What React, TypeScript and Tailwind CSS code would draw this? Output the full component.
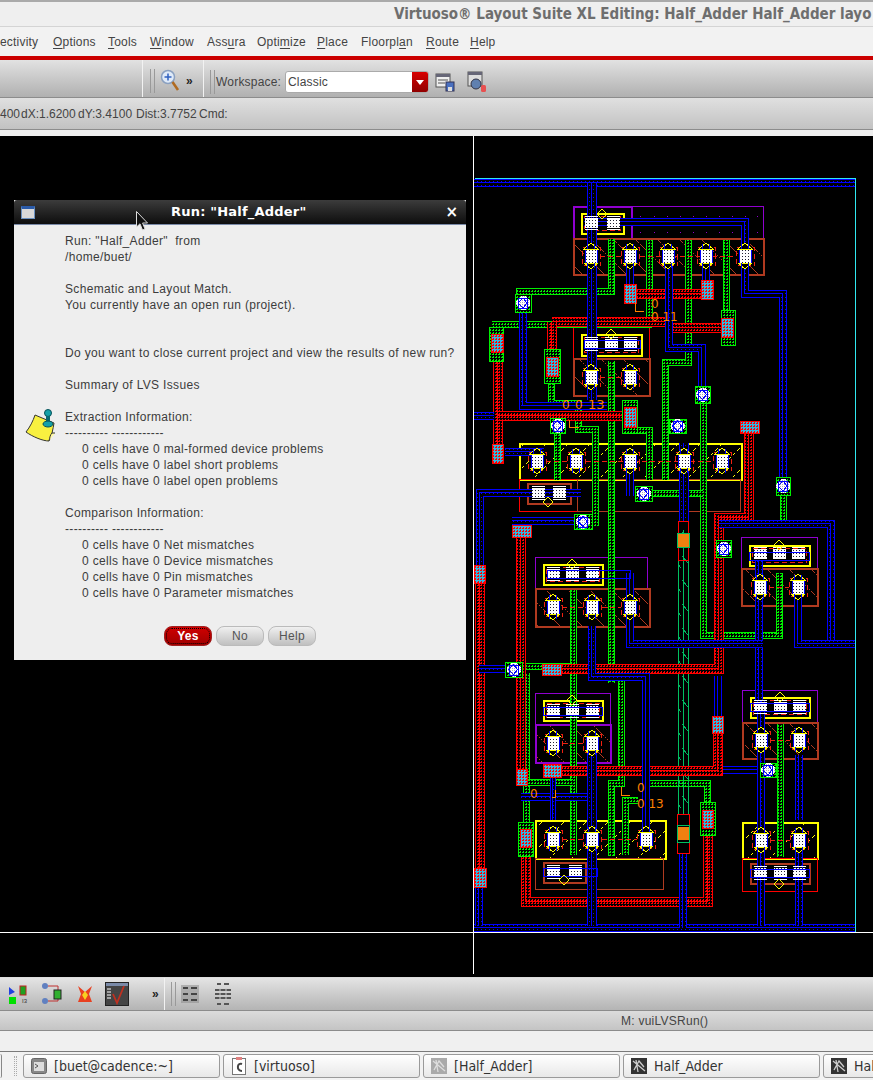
import React from "react";

const RED = "#ff0000";
const GRN = "#00f000";
const BLU = "#0000ff";
const YEL = "#ffff00";
const BRN = "#b03a20";
const PUR = "#9000d0";
const CYN = "#30b8e0";

function Wire({ c, d, w }: { c: "r" | "g" | "b"; d: string; w: number }) {
  const col = c === "r" ? RED : c === "g" ? GRN : BLU;
  const pat = c === "r" ? "url(#pr)" : c === "g" ? "url(#pg)" : "url(#pb)";
  const common = { d, fill: "none", strokeLinecap: "butt" as const, strokeLinejoin: "miter" as const };
  return (
    <g>
      <path {...common} stroke={col} strokeWidth={w} />
      <path {...common} stroke="#000" strokeWidth={w - 2} />
      <path {...common} stroke={pat} strokeWidth={w - 2} />
      {c !== "g" && <path {...common} stroke={col} strokeWidth={1} transform="translate(-0.5 -0.5)" />}
    </g>
  );
}

function Box({ a, b, c, d, s, f, w = 1, dash }: { a: number; b: number; c: number; d: number; s: string; f?: string; w?: number; dash?: string }) {
  return <rect x={a + 0.5} y={b + 0.5} width={c - a} height={d - b} stroke={s} strokeWidth={w} fill={f ?? "none"} strokeDasharray={dash} />;
}

function Dia({ x, y, rx = 5, ry = 5 }: { x: number; y: number; rx?: number; ry?: number }) {
  return <polygon points={`${x},${y - ry} ${x + rx},${y} ${x},${y + ry} ${x - rx},${y}`} fill="none" stroke={YEL} />;
}

function Tr({ x, y }: { x: number; y: number }) {
  return (
    <g>
      <Box a={x - 9} b={y - 9} c={x + 9} d={y + 9} s="#f02010" dash="5 3" />
      <rect x={x - 5} y={y - 7} width={11} height={15} fill="url(#pw)" />
      <path d={`M${x - 5.5} ${y - 8}V${y + 8}M${x + 6.5} ${y - 8}V${y + 8}`} stroke={BLU} fill="none" />
      <polygon points={`${x},${y - 13} ${x + 7},${y - 7} ${x - 7},${y - 7}`} fill="#000" stroke={YEL} />
      <polygon points={`${x},${y + 13} ${x + 7},${y + 7} ${x - 7},${y + 7}`} fill="#000" stroke={YEL} />
      <path d={`M${x - 3.5} ${y - 12}V${y - 7}M${x + 3.5} ${y - 12}V${y - 7}M${x - 3.5} ${y + 7}V${y + 12}M${x + 3.5} ${y + 7}V${y + 12}`} stroke={BLU} fill="none" />
    </g>
  );
}

function Ct({ x, y }: { x: number; y: number }) {
  return (
    <g>
      <rect x={x - 6} y={y - 5} width={13} height={10} fill="url(#pw)" />
      <path d={`M${x - 6} ${y - 6.5}H${x + 7}M${x - 6} ${y + 6.5}H${x + 7}`} stroke="#fff" fill="none" />
    </g>
  );
}

function RedVia({ a, b, c, d, s = RED }: { a: number; b: number; c: number; d: number; s?: string }) {
  return (
    <g>
      <rect x={a} y={b} width={c - a} height={d - b} fill={CYN} />
      <rect x={a} y={b} width={c - a} height={d - b} fill="url(#pr)" />
      <Box a={a} b={b} c={c} d={d} s={s} />
    </g>
  );
}

function GreenBox({ a, b, c, d }: { a: number; b: number; c: number; d: number }) {
  return (
    <g>
      <rect x={a} y={b} width={c - a} height={d - b} fill="#000" />
      <rect x={a} y={b} width={c - a} height={d - b} fill="url(#pg)" />
      <Box a={a} b={b} c={c} d={d} s={GRN} />
    </g>
  );
}

function WhiteVia({ a, b, c, d }: { a: number; b: number; c: number; d: number }) {
  const x = (a + c) / 2;
  const y = (b + d) / 2;
  return (
    <g>
      <GreenBox a={a} b={b} c={c} d={d} />
      <polygon points={`${x - 2},${y - 7} ${x + 2},${y - 7} ${x + 7},${y - 2} ${x + 7},${y + 2} ${x + 2},${y + 7} ${x - 2},${y + 7} ${x - 7},${y + 2} ${x - 7},${y - 2}`} fill="url(#pw2)" />
      <Box a={x - 5} b={y - 5} c={x + 4} d={y + 5} s={BLU} />
      <path d={`M${x - 5} ${y}L${x} ${y - 5}L${x + 4} ${y}L${x} ${y + 5}Z`} stroke={BLU} fill="none" />
    </g>
  );
}

function Label({ x, y, t, s = 13 }: { x: number; y: number; t: string; s?: number }) {
  return (
    <text x={x} y={y} fill="#ff8000" fontSize={s} fontFamily="'DejaVu Sans', sans-serif">
      {t}
    </text>
  );
}

const greens: [string, number][] = [
  ["M611 239V291H519V296", 7],
  ["M649 240V327", 7],
  ["M688 240V362H665V480", 7],
  ["M726 240V312", 7],
  ["M492 324H652", 7],
  ["M611 361V683", 7],
  ["M551 383V403H578V429H595V526", 7],
  ["M557 432V480", 7],
  ["M625 430H649V480", 7],
  ["M703 403V635H779V603", 7],
  ["M652 493H703", 7],
  ["M783 495V524", 7],
  ["M720 524H783", 7],
  ["M522 666H573", 7],
  ["M573 590V855", 7],
  ["M621 680V783H611V856", 7],
  ["M625 855V800H638", 7],
  ["M646 783H707V802", 7],
  ["M526 673V822", 7],
  ["M526 782H573", 7],
  ["M779 573V635", 7],
  ["M780 724V857", 7],
];

const reds: [string, number][] = [
  ["M630 294H707", 10],
  ["M552 322H672", 10],
  ["M552 322V367", 10],
  ["M666 328H727", 10],
  ["M498 347V463", 10],
  ["M498 416H634", 10],
  ["M749 425V518H719V669H552", 10],
  ["M521 531V781", 10],
  ["M480 565V880", 10],
  ["M718 733V771H552", 10],
  ["M708 828V902H526V830", 10],
];

const blues: [string, number][] = [
  ["M474 183H855", 8],
  ["M474 928H855", 8],
  ["M592 183V400", 10],
  ["M584 222H745V294H783V480", 8],
  ["M630 256V284", 8],
  ["M706 256V280", 8],
  ["M669 256V348H702V386", 8],
  ["M523 296V406H607", 8],
  ["M474 416H494", 8],
  ["M505 452H544", 8],
  ["M630 400V430", 8],
  ["M630 461V496", 8],
  ["M480 565V493H581", 8],
  ["M512 521H577", 8],
  ["M684 443V522", 10],
  ["M683 853V928", 8],
  ["M719 524H831V644H794", 8],
  ["M798 590V644H855", 8],
  ["M759 560V700", 8],
  ["M630 573V644H763", 8],
  ["M592 626V677H646V838", 8],
  ["M718 676V716", 8],
  ["M723 770H767", 8],
  ["M479 669H506", 8],
  ["M521 797H592", 8],
  ["M592 753V926", 10],
  ["M761 700V926", 8],
  ["M799 755V820", 8],
  ["M799 850V926", 8],
  ["M479 887V926", 8],
  ["M553 775V820", 6],
];

const thin: [number, number, number, number][] = [
  [584, 340, 640, 348],
  [547, 570, 630, 578],
  [749, 552, 809, 560],
  [543, 707, 602, 715],
  [750, 703, 809, 711],
  [750, 869, 809, 877],
  [543, 868, 597, 876],
];

const trans: [number, number][] = [
  [591, 256], [630, 256], [668, 256], [706, 256], [745, 256],
  [591, 377], [630, 377],
  [537, 461], [576, 461], [630, 461], [684, 461], [722, 461],
  [553, 607], [592, 607], [630, 607],
  [760, 587], [798, 587],
  [553, 743], [592, 743],
  [761, 740], [799, 740],
  [553, 839], [592, 839], [646, 839],
  [761, 840], [799, 840],
];

const contacts: [number, number][] = [
  [591, 223], [613, 223],
  [591, 344], [611, 344], [630, 344],
  [538, 493], [559, 493],
  [553, 574], [572, 574], [592, 574],
  [760, 554], [779, 554], [798, 554],
  [553, 711], [572, 711], [592, 711],
  [760, 707], [780, 707], [799, 707],
  [553, 872], [575, 872],
  [760, 873], [780, 873], [799, 873],
];

const yellowBoxes: [number, number, number, number][] = [
  [581, 213, 623, 233],
  [581, 334, 641, 355],
  [543, 564, 602, 584],
  [749, 545, 809, 565],
  [543, 700, 602, 720],
  [750, 697, 809, 717],
];

const dots = [640, 654, 667, 680, 693, 706, 719, 732, 745, 757];

const gateLinks = "M600 256.5H735M600 377.5H621M546 461.5H713M562 607.5H621M769 587.5H789M562 743.5H583M770 740.5H790M562 839.5H637M770 840.5H790";

function LayoutArt() {
  return (
    <svg viewBox="0 136 873 838" width={873} height={838} className="block" shapeRendering="crispEdges">
      <defs>
        <pattern id="pr" width="3" height="3" patternUnits="userSpaceOnUse">
          <rect width="2" height="1" fill={RED} />
          <rect x="1" y="2" width="1" height="1" fill={RED} />
        </pattern>
        <pattern id="pg" width="3" height="3" patternUnits="userSpaceOnUse">
          <rect width="2" height="1" fill={GRN} />
          <rect x="1" y="2" width="1" height="1" fill={GRN} />
        </pattern>
        <pattern id="pb" width="4" height="4" patternUnits="userSpaceOnUse">
          <rect x="1" y="1" width="1" height="1" fill={BLU} />
        </pattern>
        <pattern id="pw" width="3" height="3" patternUnits="userSpaceOnUse">
          <rect width="3" height="3" fill="#fff" />
          <rect x="1" y="1" width="1" height="1" fill="#223" />
        </pattern>
        <pattern id="pw2" width="2" height="2" patternUnits="userSpaceOnUse">
          <rect width="2" height="2" fill="#fff" />
          <rect width="1" height="1" fill="#aab" />
        </pattern>
        <pattern id="hb" width="22" height="22" patternUnits="userSpaceOnUse">
          <path d="M0 0L22 22" stroke={BRN} strokeDasharray="2 1" />
        </pattern>
        <pattern id="hy" width="22" height="22" patternUnits="userSpaceOnUse">
          <path d="M22 0L0 22" stroke={YEL} strokeDasharray="3 3" />
        </pattern>
        <pattern id="hg" width="11" height="24" patternUnits="userSpaceOnUse">
          <path d="M0 4L10 16" stroke="#00b060" />
        </pattern>
      </defs>
      <rect x="0" y="136" width="873" height="838" fill="#000" />

      {/* cells */}
      <Box a={573} b={206} c={631} d={238} s={PUR} w={2} />
      <Box a={631} b={206} c={763} d={238} s={PUR} />
      {dots.map((x) => (
        <g key={x}>
          <rect x={x} y={216} width={1} height={1} fill={PUR} />
          <rect x={x} y={232} width={1} height={1} fill={PUR} />
        </g>
      ))}
      <rect x={573} y={238} width={190} height={36} fill="url(#hb)" />
      <Box a={573} b={238} c={763} d={274} s={BRN} w={2} />
      <Box a={573} b={327} c={649} d={358} s={RED} />
      <rect x={573} y={358} width={76} height={37} fill="url(#hb)" />
      <Box a={573} b={358} c={649} d={395} s={BRN} w={2} />
      <rect x={519} y={443} width={222} height={36} fill="url(#hy)" />
      <Box a={519} b={443} c={741} d={479} s={YEL} w={2} />
      <Box a={519} b={479} c={577} d={511} s={RED} />
      <Box a={577} b={479} c={740} d={511} s={BRN} />
      <Box a={527} b={483} c={570} d={503} s={BRN} w={2} />
      <Box a={535} b={557} c={647} d={588} s={PUR} />
      <rect x={535} y={588} width={114} height={38} fill="url(#hb)" />
      <Box a={535} b={588} c={649} d={626} s={BRN} w={2} />
      <Box a={741} b={537} c={817} d={568} s={PUR} />
      <rect x={741} y={568} width={76} height={37} fill="url(#hb)" />
      <Box a={741} b={568} c={817} d={605} s={BRN} w={2} />
      <Box a={535} b={693} c={610} d={724} s={PUR} />
      <rect x={535} y={724} width={75} height={38} fill="url(#hb)" />
      <Box a={535} b={724} c={610} d={762} s={PUR} w={2} />
      <Box a={742} b={690} c={817} d={722} s={PUR} />
      <rect x={742} y={722} width={75} height={36} fill="url(#hb)" />
      <Box a={742} b={722} c={817} d={758} s={BRN} w={2} />
      <rect x={535} y={820} width={130} height={38} fill="url(#hy)" />
      <Box a={535} b={820} c={665} d={858} s={YEL} w={2} />
      <Box a={535} b={858} c={663} d={889} s={BRN} />
      <Box a={543} b={862} c={585} d={882} s={BRN} w={2} />
      <rect x={742} y={822} width={75} height={36} fill="url(#hy)" />
      <Box a={742} b={822} c={817} d={858} s={YEL} w={2} />
      <Box a={742} b={858} c={817} d={891} s={RED} />
      <Box a={750} b={863} c={809} d={883} s={BRN} w={2} />
      {yellowBoxes.map(([a, b, c, d], i) => (
        <g key={i}>
          <Box a={a} b={b} c={c} d={d} s={YEL} w={2} />
          <Box a={a + 3} b={b + 3} c={c - 3} d={d - 3} s="#f02010" dash="5 3" />
        </g>
      ))}

      {/* wires */}
      {greens.map(([d, w], i) => <Wire key={i} c="g" d={d} w={w} />)}
      <rect x={678} y={530} width={11} height={285} fill="url(#hg)" />
      <path d="M678.5 530V815M683.5 530V815M688.5 530V815" stroke="#00c060" fill="none" />
      {reds.map(([d, w], i) => <Wire key={i} c="r" d={d} w={w} />)}
      {blues.map(([d, w], i) => <Wire key={i} c="b" d={d} w={w} />)}
      <path d={gateLinks} stroke="#f02010" strokeDasharray="5 3" fill="none" />
      {contacts.map(([x, y], i) => <Ct key={i} x={x} y={y} />)}
      {thin.map(([a, b, c, d], i) => <Box key={i} a={a} b={b} c={c} d={d} s={BLU} />)}
      {trans.map(([x, y], i) => <Tr key={i} x={x} y={y} />)}
      <Dia x={602} y={214} />
      <Dia x={611} y={334} />
      <Dia x={548} y={502} />
      <Dia x={572} y={564} />
      <Dia x={779} y={545} />
      <Dia x={572} y={700} />
      <Dia x={780} y={697} />
      <Dia x={564} y={880} />
      <Dia x={779} y={884} />

      {/* green boxes + vias */}
      <GreenBox a={721} b={310} c={735} d={345} />
      <GreenBox a={544} b={349} c={560} d={383} />
      <GreenBox a={489} b={327} c={503} d={361} />
      <GreenBox a={622} b={400} c={637} d={433} />
      <GreenBox a={518} b={822} c={533} d={856} />
      <GreenBox a={700} b={802} c={715} d={835} />
      <RedVia a={624} b={284} c={636} d={303} />
      <RedVia a={701} b={280} c={713} d={299} />
      <RedVia a={721} b={318} c={733} d={337} />
      <RedVia a={546} b={357} c={558} d={376} />
      <RedVia a={491} b={334} c={503} d={352} />
      <RedVia a={492} b={444} c={503} d={463} />
      <RedVia a={624} b={407} c={636} d={427} />
      <RedVia a={740} b={421} c={759} d={433} />
      <RedVia a={512} b={525} c={531} d={537} />
      <RedVia a={474} b={565} c={485} d={583} />
      <RedVia a={542} b={664} c={561} d={675} />
      <RedVia a={712} b={716} c={723} d={733} />
      <RedVia a={543} b={764} c={561} d={777} />
      <RedVia a={516} b={769} c={527} d={785} />
      <RedVia a={520} b={829} c={531} d={847} />
      <RedVia a={702} b={810} c={713} d={828} />
      <RedVia a={474} b={868} c={486} d={887} />
      <WhiteVia a={515} b={294} c={531} d={312} />
      <WhiteVia a={550} b={418} c={565} d={433} />
      <WhiteVia a={669} b={419} c={686} d={433} />
      <WhiteVia a={695} b={386} c={710} d={403} />
      <WhiteVia a={635} b={486} c={652} d={501} />
      <WhiteVia a={574} b={514} c={592} d={529} />
      <WhiteVia a={776} b={477} c={790} d={495} />
      <WhiteVia a={716} b={540} c={731} d={557} />
      <WhiteVia a={505} b={662} c={522} d={677} />
      <WhiteVia a={760} b={763} c={776} d={777} />

      {/* orange pins */}
      <Box a={678} b={521} c={688} d={560} s={RED} />
      <rect x={678} y={533} width={12} height={14} fill="#f08010" />
      <Box a={677} b={533} c={689} d={547} s="#00c060" />
      <Box a={677} b={814} c={689} d={853} s={RED} />
      <rect x={677} y={827} width={13} height={13} fill="#f08010" />
      <Box a={677} b={825} c={689} d={842} s="#00c060" />
      <path d="M635 303V311H644M579 427H569V420M552 797H555V790M621 795H630M621 795V787" stroke="#ff8000" fill="none" />
      <Label x={651} y={308} t="0" s={12} />
      <Label x={651} y={321} t="0 11" s={12} />
      <Label x={562} y={409} t="0" s={12} />
      <Label x={575} y={409} t="0" s={12} />
      <Label x={588} y={409} t="13" s={13} />
      <Label x={530} y={798} t="0" s={12} />
      <Label x={637} y={792} t="0" s={12} />
      <Label x={637} y={808} t="0 13" s={12} />

      {/* ruler & boundary */}
      <path d="M474.5 178.5H855.5V932" stroke="#30e8f0" fill="none" />
      <path d="M473.5 136V974M0 932.5H873" stroke="#ffffff" fill="none" />
    </svg>
  );
}

function Grip({ className = "" }: { className?: string }) {
  return <div className={`w-[5px] h-[24px] border-x border-[#999] shrink-0 ${className}`} />;
}

function Menu({ t, u, w }: { t: string; u: number; w: number }) {
  return (
    <span className="shrink-0" style={{ width: w }}>
      {t.slice(0, u)}
      <span className="underline underline-offset-2">{t.slice(u, u + 1)}</span>
      {t.slice(u + 1)}
    </span>
  );
}

const menus: [string, number, number][] = [
  ["Options", 0, 55],
  ["Tools", 0, 42],
  ["Window", 0, 57],
  ["Assura", 3, 50],
  ["Optimize", 4, 60],
  ["Place", 0, 44],
  ["Floorplan", 7, 65],
  ["Route", 0, 44],
  ["Help", 0, 30],
];

const lines: [string, boolean?][] = [
  ['Run: "Half_Adder"  from'],
  ["/home/buet/"],
  [""],
  ["Schematic and Layout Match."],
  ["You currently have an open run (project)."],
  [""],
  [""],
  ["Do you want to close current project and view the results of new run?"],
  [""],
  ["Summary of LVS Issues"],
  [""],
  ["Extraction Information:"],
  ["---------- ------------"],
  ["0 cells have 0 mal-formed device problems", true],
  ["0 cells have 0 label short problems", true],
  ["0 cells have 0 label open problems", true],
  [""],
  ["Comparison Information:"],
  ["---------- ------------"],
  ["0 cells have 0 Net mismatches", true],
  ["0 cells have 0 Device mismatches", true],
  ["0 cells have 0 Pin mismatches", true],
  ["0 cells have 0 Parameter mismatches", true],
];

function NoteIcon() {
  return (
    <svg viewBox="0 0 34 34" width={34} height={34} className="block">
      <path d="M10 6L29 14C28 20 27 26 24 32C18 32 8 28 1 23C5 18 8 12 10 6Z" fill="#f8f040" stroke="#333" strokeWidth="1" />
      <path d="M24 32C25 28 25 26 27 24L30 24" fill="#fff8a0" stroke="#333" strokeWidth="1" />
      <circle cx="23" cy="4" r="3.5" fill="#14a0a8" stroke="#075058" />
      <path d="M23 7V14" stroke="#0a6870" strokeWidth="4" />
      <ellipse cx="23" cy="15" rx="5" ry="3" fill="#14a0a8" stroke="#075058" />
    </svg>
  );
}

function Cursor() {
  return (
    <svg viewBox="0 0 12 20" width={12} height={20} className="absolute left-[136px] top-[75px] z-10">
      <path d="M0.5 0.5V16L4 12.8L6.5 19L9 18L6.6 12H11.5Z" fill="#111" stroke="#ddd" strokeWidth="1" />
    </svg>
  );
}

function Dialog() {
  return (
    <div className="absolute left-[14px] top-[64px] w-[452px] h-[460px] flex flex-col bg-[#eeeeee]">
      <div className="h-[25px] shrink-0 rounded-t-[3px] bg-gradient-to-b from-[#3c3c3c] to-[#0e0e0e] border-b border-[#7a8aa8] flex items-center px-[7px] relative">
        <div className="w-[14px] h-[13px] bg-[#d8d8d8] border border-[#6a90c0] border-t-[3px] border-t-[#2a5aa8]" />
        <div className="flex-1 text-center text-white font-bold text-[13px] tracking-[0.2px] font-['DejaVu_Sans',sans-serif] pr-[3px]">Run: "Half_Adder"</div>
        <span className="text-white text-[15px] font-bold leading-none mr-[1px] font-['DejaVu_Sans',sans-serif]">×</span>
      </div>
      <div className="flex-1 flex relative text-[#3c3c3c] text-[12px] leading-[16px] font-['Liberation_Sans',sans-serif] tracking-[0.33px]">
        <div className="w-[51px] shrink-0" />
        <div className="pt-[8px] whitespace-pre">
          {lines.map(([t, ind], i) => (
            <div key={i} className={ind ? "h-4 pl-[17px]" : "h-4"}>
              {t}
            </div>
          ))}
        </div>
        <div className="absolute left-[11px] top-[184px]">
          <NoteIcon />
        </div>
        <div className="absolute left-[150px] top-[401px] flex gap-[4px] text-[12px] tracking-[0.3px]">
          <button className="w-[48px] h-[20px] rounded-[8px] bg-gradient-to-b from-[#d00000] to-[#a00000] text-white font-bold border border-[#a02020] outline-1 outline-dotted outline-black -outline-offset-[3px]">Yes</button>
          <button className="w-[48px] h-[20px] rounded-[8px] bg-gradient-to-b from-[#f0f0f0] to-[#c0c0c0] text-[#555] border border-[#bbb]">No</button>
          <button className="w-[48px] h-[20px] rounded-[8px] bg-gradient-to-b from-[#f0f0f0] to-[#c0c0c0] text-[#555] border border-[#bbb]">Help</button>
        </div>
      </div>
    </div>
  );
}

function TaskBtn({ w, icon, label }: { w: number; icon: React.ReactNode; label: string }) {
  return (
    <div className="shrink-0 h-[24px] rounded-[3px] border border-[#9a9a9a] bg-gradient-to-b from-white to-[#e8e8e8] flex items-center pl-[7px] gap-[7px] text-[14px] text-[#333] overflow-hidden whitespace-nowrap font-['DejaVu_Sans',sans-serif] [font-stretch:condensed]" style={{ width: w }}>
      {icon}
      <span>{label}</span>
    </div>
  );
}

function LayIcon({ dark }: { dark?: boolean }) {
  return (
    <svg viewBox="0 0 16 16" width={16} height={16} className="block shrink-0">
      <rect width="16" height="16" fill={dark ? "#333" : "#aaa"} />
      <path d="M2 3L14 13M3 12L8 3L13 9M5 2L7 14" stroke={dark ? "#ccc" : "#ddd"} strokeWidth="1.3" fill="none" />
    </svg>
  );
}

export default function App() {
  const ui = "font-['Liberation_Sans',sans-serif]";
  return (
    <div className={`w-[873px] h-[1080px] overflow-hidden flex flex-col bg-[#efefef] text-[#444] ${ui}`}>
      {/* title */}
      <div className="h-[27px] shrink-0 border-t-2 border-t-[#aaa] border-b border-b-[#d4d4d4] bg-[#efefef] flex items-center pl-[394px] whitespace-nowrap overflow-hidden">
        <span className="font-bold text-[15px] text-[#6e6e6e] font-['DejaVu_Sans',sans-serif] [font-stretch:condensed]">Virtuoso® Layout Suite XL Editing: Half_Adder Half_Adder layo</span>
      </div>
      {/* menu */}
      <div className="h-[29px] shrink-0 bg-[#f2f2f2] flex items-center text-[12px] tracking-[0.2px] whitespace-nowrap">
        <span className="w-[53px] shrink-0">ectivity</span>
        {menus.map(([t, u, w]) => (
          <Menu key={t} t={t} u={u} w={w} />
        ))}
      </div>
      <div className="h-[4px] shrink-0 bg-[#cc0000]" />
      {/* toolbar */}
      <div className="h-[38px] shrink-0 bg-gradient-to-b from-[#e2e2e2] to-[#b0b0b0] border-b border-[#8c8c8c] flex items-stretch">
        <div className="w-[143px] shrink-0 border-r border-[#f2f2f2]" />
        <div className="w-[61px] shrink-0 border-r border-[#f2f2f2] flex items-center pl-[7px] pt-[5px]">
          <Grip />
          <svg viewBox="0 0 20 24" width={20} height={24} className="ml-[5px] block">
            <circle cx="8" cy="8" r="6.5" fill="#dfeaf8" stroke="#8aa0c0" strokeWidth="1.5" />
            <path d="M8 4.5V11.5M4.5 8H11.5" stroke="#3060c0" strokeWidth="1.5" />
            <path d="M12.5 13L18 21" stroke="#b06a20" strokeWidth="2.6" />
          </svg>
          <span className="ml-[6px] text-[12px] font-bold text-[#222]">»</span>
        </div>
        <div className="flex items-center pl-[6px] pt-[7px]">
          <Grip />
          <span className="ml-[1px] w-[69px] text-[12px] tracking-[0.2px]">Workspace:</span>
          <div className="w-[144px] h-[22px] rounded-[3px] bg-white border border-[#aaa] flex items-center justify-between overflow-hidden text-[12px] pl-[2px]">
            <span className="tracking-[0.2px]">Classic</span>
            <div className="w-[16px] h-full bg-gradient-to-b from-[#d80000] to-[#900000] flex items-center justify-center">
              <div className="w-0 h-0 border-x-[4px] border-x-transparent border-t-[5px] border-t-white" />
            </div>
          </div>
          <svg viewBox="0 0 20 20" width={20} height={20} className="ml-[6px] block">
            <rect x="1" y="2" width="14" height="13" fill="#eee" stroke="#555" />
            <rect x="1" y="2" width="14" height="3" fill="#667" />
            <path d="M3 8H13M3 11H10" stroke="#555" />
            <rect x="11" y="10" width="8" height="9" fill="#4a70c0" stroke="#335" />
            <rect x="13" y="15" width="4" height="4" fill="#ddd" />
          </svg>
          <svg viewBox="0 0 20 22" width={20} height={22} className="ml-[12px] block">
            <rect x="1" y="1" width="14" height="14" fill="#ddd" stroke="#555" />
            <rect x="1" y="1" width="14" height="3" fill="#667" />
            <circle cx="9" cy="13" r="5" fill="#6080b0" stroke="#334" />
            <rect x="14" y="14" width="5" height="7" rx="1.5" fill="#e85050" />
          </svg>
        </div>
      </div>
      {/* coords */}
      <div className="h-[32px] shrink-0 bg-gradient-to-b from-[#e0e0e0] to-[#c2c2c2] border-b border-[#8c8c8c] flex items-center text-[12px] whitespace-pre overflow-hidden">
        <span className="w-[21px] shrink-0">400</span>
        <span className="w-[57px] shrink-0">dX:1.6200</span>
        <span className="w-[58px] shrink-0">dY:3.4100</span>
        <span className="w-[63px] shrink-0">Dist:3.7752</span>
        <span>Cmd:</span>
      </div>
      <div className="h-[6px] shrink-0 bg-[#efefef]" />
      {/* canvas */}
      <div className="h-[841px] shrink-0 bg-black relative">
        <LayoutArt />
        <Dialog />
        <Cursor />
      </div>
      {/* bottom toolbar */}
      <div className="h-[34px] shrink-0 bg-gradient-to-b from-[#e4e4e4] to-[#b4b4b4] border-t border-[#ddd] border-b border-b-[#8c8c8c] flex items-stretch">
        <div className="w-[165px] shrink-0 border-r border-[#f2f2f2] flex items-center pl-[8px] relative">
          <svg viewBox="0 0 24 20" width={24} height={20} className="block">
            <path d="M1 3L7 8L1 11Z" fill="#2040e0" />
            <rect x="12" y="2" width="6" height="9" fill="#20a020" stroke="#c02020" />
            <rect x="1" y="13" width="7" height="7" fill="#00e000" />
            <text x="14" y="19" fontSize="6" fill="#333" fontFamily="'Liberation Sans',sans-serif">I3</text>
          </svg>
          <svg viewBox="0 0 22 22" width={22} height={22} className="ml-[8px] block">
            <circle cx="5" cy="3" r="3" fill="#6080c0" />
            <circle cx="5" cy="18" r="3" fill="#6080c0" />
            <path d="M8 3H18V8M8 18H18V14" stroke="#c03030" fill="none" />
            <rect x="14" y="7" width="7" height="9" fill="#30b030" stroke="#222" />
          </svg>
          <svg viewBox="0 0 18 20" width={18} height={20} className="ml-[14px] block">
            <path d="M2 2L9 8L16 2L13 10L16 18H2L5 10Z" fill="#e84020" />
            <path d="M6 11L9 7L12 11L9 16Z" fill="#f8d020" />
          </svg>
          <svg viewBox="0 0 24 24" width={24} height={24} className="ml-[11px] block">
            <rect x="0.5" y="0.5" width="23" height="23" fill="#444" stroke="#222" />
            <rect x="1" y="1" width="22" height="3" fill="#7a8aa8" />
            <path d="M2 7H6M2 10H6M2 13H6M2 16H6" stroke="#fff" />
            <path d="M8 12L12 21L19 4" stroke="#c03020" strokeWidth="1.8" fill="none" />
          </svg>
          <span className="absolute left-[152px] top-[7px] text-[12px] font-bold text-[#222]">»</span>
        </div>
        <div className="flex items-center pl-[6px]">
          <Grip />
          <svg viewBox="0 0 18 18" width={18} height={18} className="ml-[5px] block">
            <rect x="0" y="0" width="18" height="18" fill="#888" opacity="0.5" />
            <path d="M2 3H7M10 3H16M2 9H7M10 9H16M2 15H7M10 15H16" stroke="#444" strokeWidth="2" />
          </svg>
          <svg viewBox="0 0 18 22" width={18} height={22} className="ml-[15px] block">
            <path d="M3 1H7M10 1H15M1 7H17M1 11H17M1 15H17M3 21H7M10 21H15" stroke="#555" strokeWidth="2" />
            <path d="M6 5V17M12 5V17" stroke="#ccc" />
          </svg>
        </div>
      </div>
      {/* status */}
      <div className="h-[20px] shrink-0 bg-gradient-to-b from-[#dcdcdc] to-[#c4c4c4] border-b border-[#8c8c8c] flex items-center pl-[621px] text-[12px] tracking-[0.25px]">
        M: vuiLVSRun()
      </div>
      <div className="h-[21px] shrink-0 bg-[#f0f0f0] border-b border-[#7a7a7a]" />
      {/* taskbar */}
      <div className="flex-1 bg-[#f2f2f2] flex items-center gap-[3px] overflow-hidden relative">
        <div className="w-[2px] h-[24px] border-r border-[#888] rounded-r-[3px] shrink-0" />
        <div className="w-[3px] h-[20px] ml-[9px] mr-[3px] border-x border-dotted border-[#aaa] shrink-0" />
        <TaskBtn
          w={197}
          label="[buet@cadence:~]"
          icon={
            <svg viewBox="0 0 16 16" width={16} height={16} className="block shrink-0">
              <rect x="0.5" y="0.5" width="15" height="15" rx="2" fill="#888" stroke="#666" />
              <rect x="3" y="4" width="10" height="9" fill="#ddd" />
              <path d="M4 6L7 8L4 10" stroke="#555" fill="none" />
            </svg>
          }
        />
        <TaskBtn
          w={197}
          label="[virtuoso]"
          icon={
            <svg viewBox="0 0 16 18" width={16} height={18} className="block shrink-0">
              <rect x="1.5" y="1.5" width="13" height="16" fill="#fff" stroke="#777" />
              <rect x="5" y="0" width="6" height="3" fill="#e08080" />
              <path d="M11 7C6 5 5 14 11 14" stroke="#444" strokeWidth="2" fill="none" />
            </svg>
          }
        />
        <TaskBtn w={197} label="[Half_Adder]" icon={<LayIcon />} />
        <TaskBtn w={197} label="Half_Adder" icon={<LayIcon dark />} />
        <TaskBtn w={197} label="Hal" icon={<LayIcon dark />} />
      </div>
    </div>
  );
}
